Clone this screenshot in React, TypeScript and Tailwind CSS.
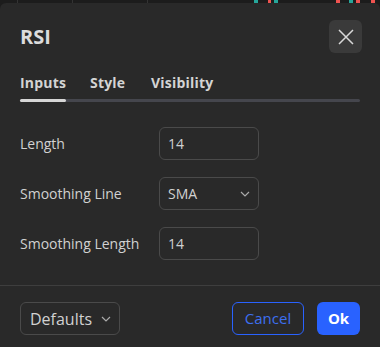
import React from "react";

export default function App() {
  const font = { fontFamily: '"Open Sans", "Noto Sans", sans-serif' };
  return (
    <div className="w-[380px] h-[347px] bg-[#1c1c1c] overflow-hidden relative" style={font}>
      {/* chart remnants at top */}
      <div className="absolute top-0 left-[17px] w-px h-[3px] bg-[#333]" />
      <div className="absolute top-0 left-[72px] w-px h-[3px] bg-[#333]" />
      <div className="absolute top-0 left-[147px] w-px h-[3px] bg-[#333]" />
      <div className="absolute top-0 left-[254px] w-[4px] h-[3px] bg-[#26a69a]" />
      <div className="absolute top-0 left-[268px] w-[3px] h-[3px] bg-[#ef5350]" />
      <div className="absolute top-0 left-[274px] w-[4px] h-[3px] bg-[#26a69a]" />
      <div className="absolute top-0 left-[336px] w-[4px] h-[3px] bg-[#ef5350]" />
      <div className="absolute top-0 left-[349px] w-[4px] h-[3px] bg-[#26a69a]" />
      <div className="absolute top-0 left-[356px] w-[4px] h-[3px] bg-[#ef5350]" />
      <div className="absolute top-0 left-[371px] w-[4px] h-[3px] bg-[#ef5350]" />

      <div className="absolute top-[3px] left-0 w-[380px] h-[344px] bg-[#292929] rounded-t-[6px] flex flex-col">
        {/* header */}
        <div className="flex items-center justify-between pl-[20px] pr-[18px] pt-[17px] h-[50px]">
          <div className="text-[20px] font-bold text-[#dcdcdc] leading-none">RSI</div>
          <div className="w-[33px] h-[33px] rounded-[6px] bg-[#3a3a3a] flex items-center justify-center">
            <svg width="18" height="18" viewBox="0 0 18 18">
              <path d="M2 2 L16 16 M16 2 L2 16" stroke="#d8d8d8" strokeWidth="1.5" />
            </svg>
          </div>
        </div>
        {/* tabs */}
        <div className="px-[20px] mt-[20px]">
          <div className="flex text-[14px] font-bold text-[#d4d4d4] leading-[20px] tracking-[0.2px]">
            <span className="w-[70px]">Inputs</span>
            <span className="w-[61px]">Style</span>
            <span>Visibility</span>
          </div>
          <div className="mt-[6px] h-[3px] w-[340px] rounded-full bg-[#45464d] relative">
            <div className="absolute left-0 top-0 h-[3px] w-[46px] rounded-full bg-[#d6d6d6]" />
          </div>
        </div>
        {/* rows */}
        <div className="px-[20px] mt-[25px] flex flex-col gap-[17px] text-[14px] text-[#d1d1d1]">
          <div className="flex items-center h-[33px]">
            <span className="w-[139px]">Length</span>
            <div className="w-[100px] h-[33px] border border-[#4a4a4a] rounded-[6px] flex items-center px-[8px]">14</div>
          </div>
          <div className="flex items-center h-[33px]">
            <span className="w-[139px]">Smoothing Line</span>
            <div className="w-[100px] h-[33px] border border-[#4a4a4a] rounded-[6px] flex items-center justify-between pl-[8px] pr-[8px]">
              <span>SMA</span>
              <svg width="10" height="6" viewBox="0 0 10 6">
                <path d="M1 1 L5 5 L9 1" stroke="#aaa" strokeWidth="1.2" fill="none" />
              </svg>
            </div>
          </div>
          <div className="flex items-center h-[33px]">
            <span className="w-[139px]">Smoothing Length</span>
            <div className="w-[100px] h-[33px] border border-[#4a4a4a] rounded-[6px] flex items-center px-[8px]">14</div>
          </div>
        </div>
        {/* separator */}
        <div className="mt-[25px] h-px bg-[#3e3e3e]" />
        {/* footer */}
        <div className="flex items-center px-[20px] mt-[16px] text-[14px]">
          <div className="w-[100px] h-[33px] border border-[#4a4a4a] rounded-[6px] flex items-center justify-between pl-[9px] pr-[8px] text-[16px] text-[#d1d1d1]">
            <span>Defaults</span>
            <svg width="10" height="6" viewBox="0 0 10 6">
              <path d="M1 1 L5 5 L9 1" stroke="#aaa" strokeWidth="1.2" fill="none" />
            </svg>
          </div>
          <div className="flex-1" />
          <div className="w-[72px] h-[33px] border border-[#2962ff] rounded-[6px] flex items-center justify-center text-[15px] text-[#3d6fef]">Cancel</div>
          <div className="ml-[13px] w-[43px] h-[33px] bg-[#2962ff] rounded-[6px] flex items-center justify-center text-[15px] font-bold text-white">Ok</div>
        </div>
      </div>
    </div>
  );
}
